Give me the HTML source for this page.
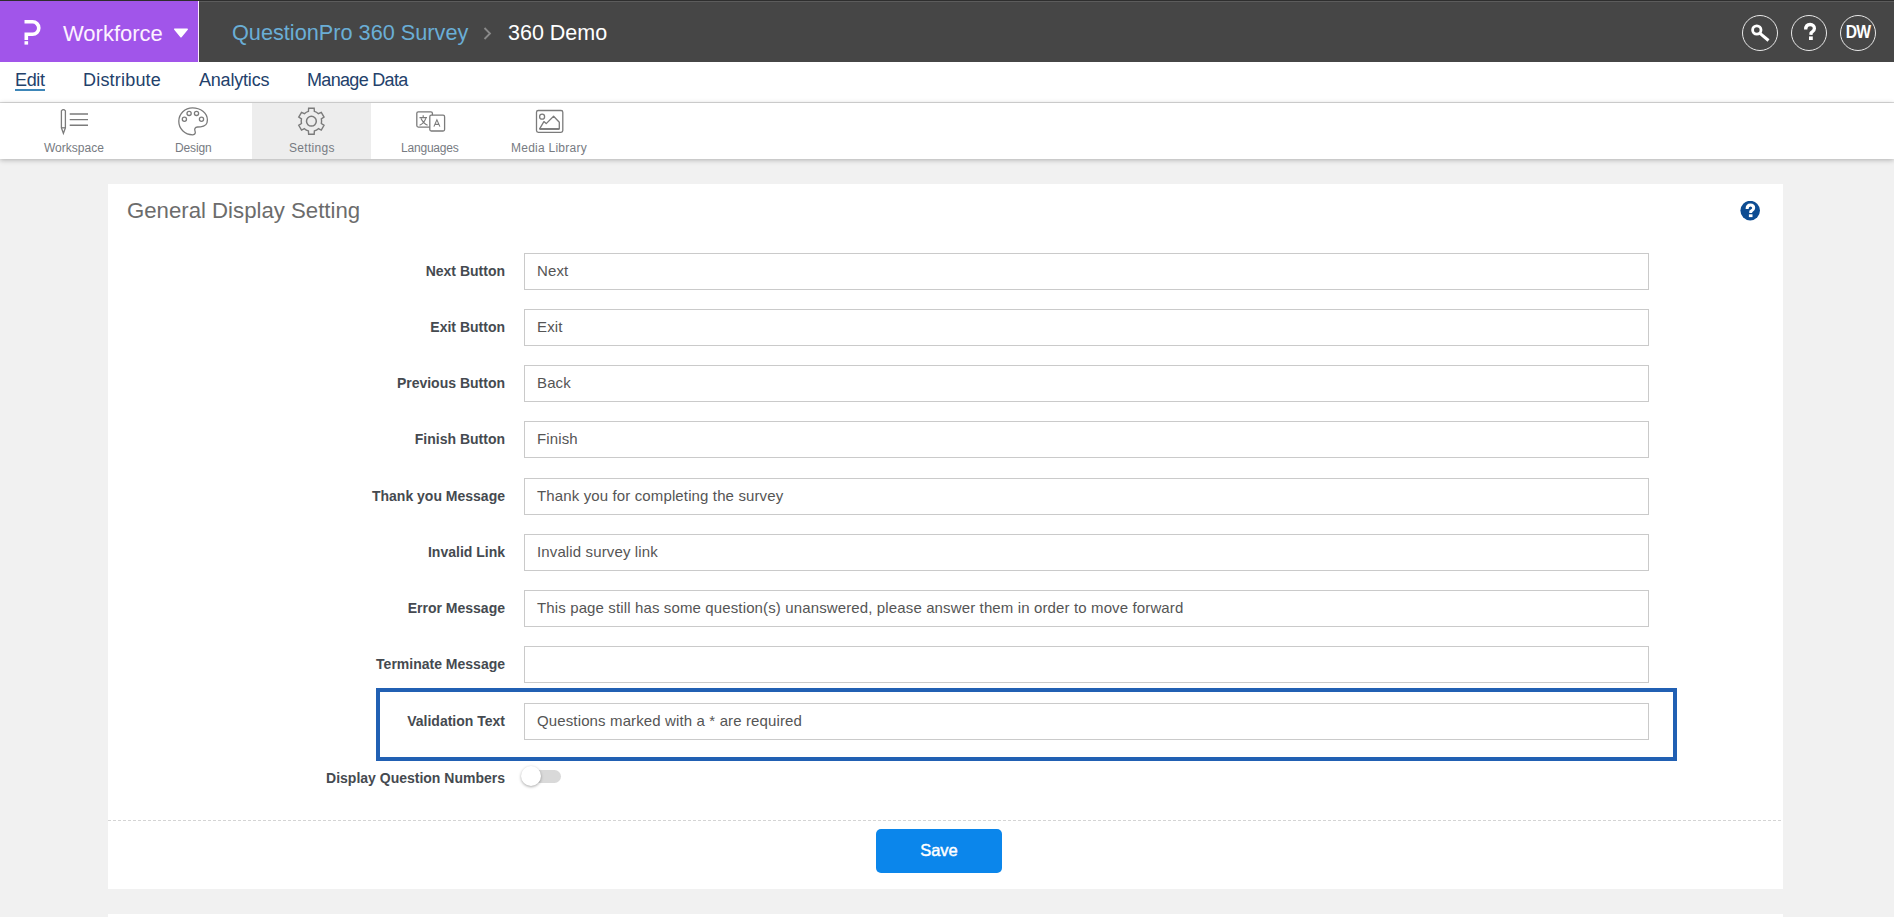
<!DOCTYPE html>
<html><head><meta charset="utf-8">
<style>
*{box-sizing:border-box;margin:0;padding:0}
html,body{width:1894px;height:917px;overflow:hidden;background:#f1f1f1;font-family:"Liberation Sans",sans-serif}
.abs{position:absolute;white-space:nowrap}
#topbar{position:absolute;left:0;top:0;width:1894px;height:62px;background:#464646}
#tline{position:absolute;left:0;top:0;width:1894px;height:1px;background:#2e2e2e}
#tline2{position:absolute;left:199px;top:1px;width:1695px;height:1px;background:#5c5c5c}
#purple{position:absolute;left:0;top:0;width:198px;height:62px;background:#a155ea}
#sep{position:absolute;left:198px;top:0;width:1px;height:62px;background:#fbe9ff}
#nav{position:absolute;left:0;top:62px;width:1894px;height:41px;background:#fff;border-bottom:1px solid #dcdcdc}
.nav{position:absolute;top:69px;font-size:18px;color:#23416b;line-height:22px;white-space:nowrap}
#tool{position:absolute;left:0;top:103px;width:1894px;height:56px;background:#fff;box-shadow:0 1px 5px rgba(0,0,0,.28)}
#active{position:absolute;left:252px;top:103px;width:119px;height:56px;background:#ededed}
.tl{position:absolute;top:141px;font-size:12px;color:#777b82;line-height:14px;white-space:nowrap}
#panel{position:absolute;left:108px;top:184px;width:1675px;height:705px;background:#fff}
#panel2{position:absolute;left:108px;top:914px;width:1675px;height:10px;background:#fff}
.lbl{position:absolute;right:1389px;font-size:14px;font-weight:bold;color:#454a50;line-height:16px;text-align:right;white-space:nowrap}
.inp{position:absolute;left:524px;width:1125px;height:37px;border:1px solid #cacaca;background:#fff}
.itx{position:absolute;left:537px;font-size:15px;letter-spacing:0.13px;color:#555;line-height:18px;white-space:nowrap}
</style></head><body>
<div id="topbar"></div>
<div id="purple"></div>
<div id="sep"></div>
<div id="tline"></div><div id="tline2"></div>
<svg class="abs" style="left:0;top:0" width="60" height="62">
  <path d="M24.5,21.8 H32.55 A6.25,6.25 0 0 1 32.55,34.3 H26.3 V40" fill="none" stroke="#fff" stroke-width="3.6" stroke-linejoin="miter"/>
  <rect x="24.5" y="41.2" width="3.6" height="3.4" fill="#fff"/>
</svg>
<div class="abs" style="left:63px;top:22px;font-size:22px;color:#fdf2ff;line-height:24px">Workforce</div>
<svg class="abs" style="left:172px;top:27px" width="18" height="12"><path d="M2.8,2.2 H15.2 L9,9.8 Z" fill="#fff" stroke="#fff" stroke-width="1.5" stroke-linejoin="round"/></svg>
<div class="abs" style="left:232px;top:21px;font-size:21.7px;color:#6aaed6;line-height:24px">QuestionPro 360 Survey</div>
<svg class="abs" style="left:480px;top:24px" width="16" height="18"><path d="M4.5,4 L10,9.5 L4.5,15" fill="none" stroke="#8a8a8a" stroke-width="1.8"/></svg>
<div class="abs" style="left:508px;top:21px;font-size:21.5px;color:#fff;line-height:24px">360 Demo</div>
<div class="abs" style="left:1742px;top:15px;width:36px;height:36px;border:1.6px solid #e8e8e8;border-radius:50%"></div>
<svg class="abs" style="left:1742px;top:15px" width="36" height="36"><circle cx="14.8" cy="15" r="4.2" fill="none" stroke="#fff" stroke-width="2.8"/><path d="M18,18.3 L26.5,25.5" stroke="#fff" stroke-width="3" stroke-linecap="butt"/></svg>
<div class="abs" style="left:1791px;top:15px;width:36px;height:36px;border:1.6px solid #e8e8e8;border-radius:50%"></div>
<svg class="abs" style="left:1791px;top:15px" width="36" height="36"><path d="M14.7,14.6 C14.7,11.2 16.6,9.5 19.1,9.5 C21.9,9.5 23.4,11.4 23.4,13.4 C23.4,15.9 21.3,16.7 20.1,17.9 L19.9,19.9" fill="none" stroke="#fff" stroke-width="3.3"/><rect x="18" y="21.4" width="3.8" height="3.6" fill="#fff"/></svg>
<div class="abs" style="left:1840px;top:15px;width:36px;height:36px;border:1.6px solid #e8e8e8;border-radius:50%"></div>
<div class="abs" style="left:1840px;top:15px;width:36px;height:36px;text-align:center;font-size:18px;font-weight:bold;color:#fff;line-height:34px;letter-spacing:-1px;transform:scaleX(0.87)">DW</div>

<div id="nav"></div>
<div class="nav" style="left:15px;letter-spacing:-0.35px">Edit</div>
<div class="abs" style="left:15px;top:89px;width:30px;height:2px;background:#3d86b8"></div>
<div class="nav" style="left:83px;letter-spacing:0.2px">Distribute</div>
<div class="nav" style="left:199px;letter-spacing:-0.2px">Analytics</div>
<div class="nav" style="left:307px;letter-spacing:-0.68px">Manage Data</div>

<div id="tool"></div>
<div id="active"></div>
<svg class="abs" style="left:0;top:0" width="600" height="160" fill="none" stroke="#7b7b7b" stroke-width="1.3">
  <path d="M61.4,110.8 Q63.4,108.4 65.4,110.8 V127.8 L63.4,133.4 L61.4,127.8 Z"/>
  <path d="M61.4,127.8 H65.4"/>
  <path d="M69.7,114 H88 M69.7,119.6 H88 M69.7,125.2 H88" stroke-width="1.4"/>
  <path d="M192.5,107.8 C200.5,107.8 207.4,113 207.4,120 C207.4,124.5 204.5,126.5 200.5,126.8 L197.5,127 C195,127.2 194.2,129 195,131 C195.8,133 195,134.8 192.8,134.8 C184.5,134.8 178.8,128.5 178.8,121.3 C178.8,113.8 185,107.8 192.5,107.8 Z"/>
  <circle cx="189.1" cy="113.4" r="2.1"/><circle cx="196.5" cy="113.4" r="2.1"/><circle cx="184.4" cy="119.2" r="2.1"/><circle cx="201.5" cy="119.2" r="2.1"/>
  <path d="M308.42,111.45 L308.63,108.19 L314.17,108.19 L314.38,111.45 A10.2,10.2 0 0 1 318.36,113.74 L321.28,112.30 L324.05,117.09 L321.34,118.91 A10.2,10.2 0 0 1 321.34,123.49 L324.05,125.31 L321.28,130.10 L318.36,128.66 A10.2,10.2 0 0 1 314.38,130.95 L314.17,134.21 L308.63,134.21 L308.42,130.95 A10.2,10.2 0 0 1 304.44,128.66 L301.52,130.10 L298.75,125.31 L301.46,123.49 A10.2,10.2 0 0 1 301.46,118.91 L298.75,117.09 L301.52,112.30 L304.44,113.74 A10.2,10.2 0 0 1 308.42,111.45 Z" stroke-width="1.4"/>
  <circle cx="311.4" cy="121.2" r="4.9" stroke-width="1.5"/>
  <rect x="416.8" y="111.8" width="15.6" height="15.3" rx="1.5"/>
  <rect x="429.8" y="115.2" width="14.8" height="15.8" rx="1.5" fill="#fff"/>
  <path d="M419.5,117.6 H427 M423.2,115.2 V117.4 M421,118.4 Q423.5,123.5 427.6,125.2 M425.8,118.4 Q424,123.5 419.6,125.2" stroke-width="1.15"/>
  <path d="M433.9,126.6 L436.9,119.9 L439.9,126.6 M434.9,124.4 H438.9" stroke-width="1.1"/>
  <rect x="536.5" y="110.5" width="26.3" height="21.8" rx="1.8"/>
  <circle cx="542.1" cy="116.7" r="2.5"/>
  <path d="M539.6,128.8 L543.9,121.6 L546.2,123.6 L553.6,116.3 L559.3,122.2 V128.8 Z" stroke-linejoin="round"/>
  <path d="M539.6,129 H559.3" stroke-width="1.8"/>
</svg>
<div class="tl" style="left:44px">Workspace</div>
<div class="tl" style="left:175px;letter-spacing:-0.15px">Design</div>
<div class="tl" style="left:289px;letter-spacing:0.3px">Settings</div>
<div class="tl" style="left:401px;letter-spacing:-0.2px">Languages</div>
<div class="tl" style="left:511px;letter-spacing:0.25px">Media Library</div>

<div id="panel"></div>
<div id="panel2"></div>
<div class="abs" style="left:127px;top:198px;font-size:22.2px;color:#6c6c6c;line-height:26px">General Display Setting</div>
<svg class="abs" style="left:1740px;top:201px" width="21" height="21"><circle cx="10.2" cy="9.6" r="9.8" fill="#0d4c92"/><path d="M7.1,7.9 C7.1,5.2 8.6,3.9 10.4,3.9 C12.5,3.9 13.7,5.3 13.7,7 C13.7,8.9 11.9,9.5 10.8,10.4 L10.7,12" fill="none" stroke="#fff" stroke-width="3"/><rect x="8.9" y="13.3" width="3.6" height="2.8" fill="#fff"/></svg>
<div class="lbl" style="top:263px">Next Button</div>
<div class="inp" style="top:253px"></div>
<div class="itx" style="top:262px">Next</div>
<div class="lbl" style="top:319px">Exit Button</div>
<div class="inp" style="top:309px"></div>
<div class="itx" style="top:318px">Exit</div>
<div class="lbl" style="top:375px">Previous Button</div>
<div class="inp" style="top:365px"></div>
<div class="itx" style="top:374px">Back</div>
<div class="lbl" style="top:431px">Finish Button</div>
<div class="inp" style="top:421px"></div>
<div class="itx" style="top:430px">Finish</div>
<div class="lbl" style="top:488px">Thank you Message</div>
<div class="inp" style="top:478px"></div>
<div class="itx" style="top:487px">Thank you for completing the survey</div>
<div class="lbl" style="top:544px">Invalid Link</div>
<div class="inp" style="top:534px"></div>
<div class="itx" style="top:543px">Invalid survey link</div>
<div class="lbl" style="top:600px">Error Message</div>
<div class="inp" style="top:590px"></div>
<div class="itx" style="top:599px">This page still has some question(s) unanswered, please answer them in order to move forward</div>
<div class="lbl" style="top:656px">Terminate Message</div>
<div class="inp" style="top:646px"></div>
<div class="lbl" style="top:713px">Validation Text</div>
<div class="inp" style="top:703px"></div>
<div class="itx" style="top:712px">Questions marked with a * are required</div>
<div class="abs" style="left:376px;top:688px;width:1301px;height:73px;border:4px solid #2160b3"></div>
<div class="lbl" style="top:770px">Display Question Numbers</div>
<div class="abs" style="left:524px;top:770px;width:37px;height:13px;border-radius:7px;background:#d9d9d9"></div>
<div class="abs" style="left:521px;top:766px;width:20px;height:20px;border-radius:50%;background:#fff;box-shadow:0 1px 3px rgba(0,0,0,.35)"></div>
<div class="abs" style="left:108px;top:820px;width:1675px;height:1px;background:repeating-linear-gradient(to right,#d4d4d4 0 3px,#fff 3px 5px)"></div>
<div class="abs" style="left:876px;top:829px;width:126px;height:44px;border-radius:5px;background:#0b86eb"></div>
<div class="abs" style="left:876px;top:840px;width:126px;text-align:center;font-size:16.5px;color:#fff;line-height:20px;font-weight:normal;-webkit-text-stroke:0.45px #fff">Save</div>
</body></html>
